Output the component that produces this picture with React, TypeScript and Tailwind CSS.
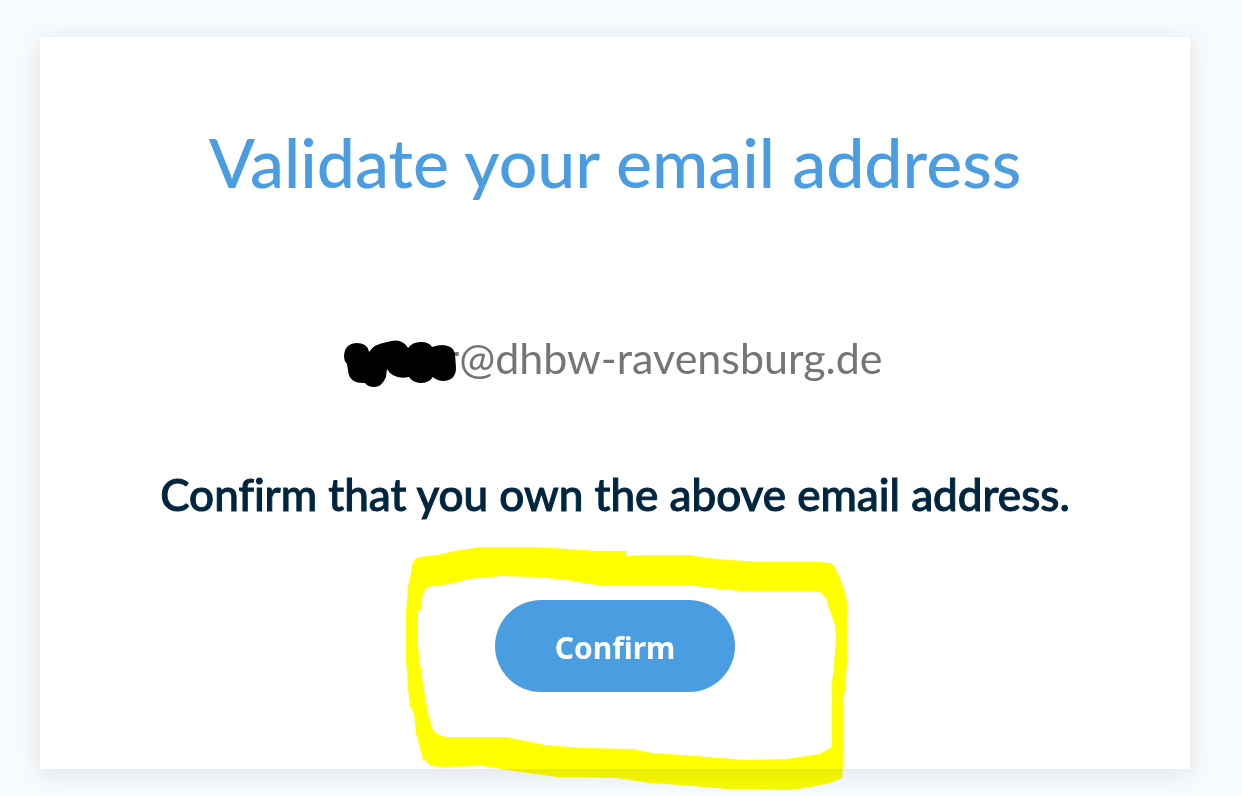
const HIGHLIGHT_PATH =
  'M412 564 L415 559 L420 557 L437 555 L455 551 L481 547 L535 547 L568 549 L595 551 L626 551 L626 556 L649 555 L689 555 L707 558 L730 560 L761 562 L819 562 L831 563 L835 567 L841 581 L845 592 L847 602 L847 663 L845 690 L843 699 L843 765 L842 778 L830 783 L806 788 L788 790 L728 789 L680 785 L650 783 L617 778 L557 777 L528 773 L495 768 L483 766 L443 767 L431 766 L423 759 L420 748 L416 733 L414 713 L410 706 L408 688 L406 660 L406 612 L408 587 L411 573 Z ' +
  'M422 597 L422 607 L418 612 L417 638 L420 663 L424 690 L428 713 L433 730 L439 735 L447 737 L505 737 L545 745 L583 748 L633 749 L652 753 L683 755 L745 760 L787 759 L820 754 L832 747 L832 682 L834 665 L836 638 L835 625 L829 608 L826 598 L820 592 L803 591 L740 591 L720 589 L688 585 L598 585 L583 583 L568 580 L535 577 L502 576 L468 579 L451 584 L432 586 L426 588 Z';

const REDACTION_PATH =
  'M344 357 Q344 344 356 343 Q368 343 369 352 Q374 344 387 342 Q402 337 408 348 Q412 342 421 342 Q429 342 432 347 Q437 345 443 345 Q454 346 455 354 L456 368 Q456 380 444 381 Q437 381 433 377 Q429 383 420 383 Q412 382 409 377 Q393 380 387 369 L386 377 Q382 387 374 387 Q368 387 365 383 Q349 384 348 370 L347 364 Q344 361 344 357 Z';

const Redaction = () => (
  <svg viewBox="344 330 112 56" className="relative -mr-3 h-14 w-28 shrink-0 overflow-visible" aria-hidden="true">
    <path d={REDACTION_PATH} fill="#000000" />
  </svg>
);

const Highlight = () => (
  <svg
    viewBox="375 540 480 252"
    className="pointer-events-none absolute -top-15 left-1/2 h-[252px] w-[480px] max-w-none -translate-x-1/2 mix-blend-multiply"
    aria-hidden="true"
  >
    <path d={HIGHLIGHT_PATH} fill="#ffff00" fillRule="evenodd" />
  </svg>
);

const App = () => {
  return (
    <div className="min-h-screen bg-[#f7fbfe] pt-[37px] pr-13 pb-[27px] pl-10 font-['Lato',sans-serif] [font-variant-ligatures:none]">
      <main className="flex flex-col items-center bg-white px-8 pt-[85px] pb-[77px] text-center shadow-[0_4px_24px_rgba(0,0,0,0.1)]">
        <h1 className="text-[68px] leading-20 font-medium text-[#4a9de0]">Validate your email address</h1>

        <div className="mt-32 flex items-center pr-1 text-[43px] leading-14 text-[#757575]">
          <Redaction />
          <span>r@dhbw-ravensburg.de</span>
        </div>

        <p className="mt-20 text-[44px] leading-14 font-medium text-[#00263e] [-webkit-text-stroke:1px_currentColor]">
          Confirm that you own the above email address.
        </p>

        <div className="relative mt-[78px]">
          <button
            type="button"
            className="block h-[92px] w-60 rounded-full bg-[#4a9de0] pt-0.5 font-['Noto_Sans',sans-serif] text-[30px] font-bold text-white"
          >
            Confirm
          </button>
          <Highlight />
        </div>
      </main>
    </div>
  );
};

export default App;
